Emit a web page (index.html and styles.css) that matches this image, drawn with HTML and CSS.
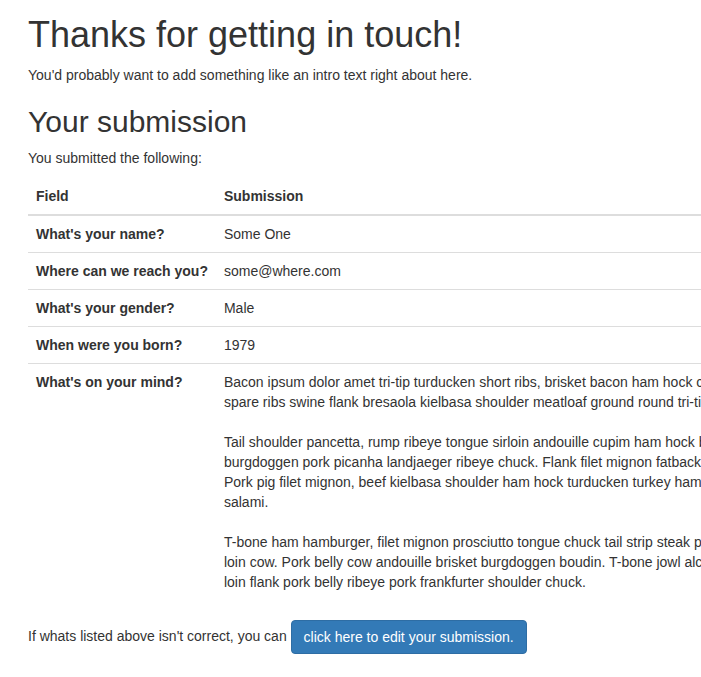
FILE: index.html
```html
<!DOCTYPE html>
<html lang="en">
<head>
<meta charset="utf-8">
<title>Thanks for getting in touch!</title>
<link rel="stylesheet" href="styles.css">
</head>
<body>
<div class="container">
  <h1 class="title">Thanks for getting in touch!</h1>
  <p class="lead-text">You'd probably want to add something like an intro text right about here.</p>
  <h2 class="subtitle">Your submission</h2>
  <p class="lead-text">You submitted the following:</p>
  <table class="table">
    <thead>
      <tr><th class="col-field">Field</th><th>Submission</th></tr>
    </thead>
    <tbody>
      <tr><th class="col-field">What's your name?</th><td>Some One</td></tr>
      <tr><th class="col-field">Where can we reach you?</th><td>some@where.com</td></tr>
      <tr><th class="col-field">What's your gender?</th><td>Male</td></tr>
      <tr><th class="col-field">When were you born?</th><td>1979</td></tr>
      <tr><th class="col-field">What's on your mind?</th><td class="long">Bacon ipsum dolor amet tri-tip turducken short ribs, brisket bacon ham hock chicken pork loin jerky.<br>spare ribs swine flank bresaola kielbasa shoulder meatloaf ground round tri-tip capicola.<br><br>Tail shoulder pancetta, rump ribeye tongue sirloin andouille cupim ham hock beef ribs jowl.<br>burgdoggen pork picanha landjaeger ribeye chuck. Flank filet mignon fatback pastrami kevin.<br>Pork pig filet mignon, beef kielbasa shoulder ham hock turducken turkey hamburger drumstick<br>salami.<br><br>T-bone ham hamburger, filet mignon prosciutto tongue chuck tail strip steak pig short<br>loin cow. Pork belly cow andouille brisket burgdoggen boudin. T-bone jowl alcatra strip<br>loin flank pork belly ribeye pork frankfurter shoulder chuck.</td></tr>
    </tbody>
  </table>
  <p class="lead-text">If whats listed above isn't correct, you can <a class="btn" href="#">click here to edit your submission.</a></p>
</div>
</body>
</html>
```
FILE: styles.css
```css
html, body {
  margin: 0;
  padding: 0;
  overflow: hidden;
  background: #fff;
}
body {
  font-family: "Liberation Sans", Arial, sans-serif;
  font-size: 14px;
  line-height: 20px;
  color: #333;
}
.container {
  width: 1000px;
  padding: 0 28px;
}
.title {
  font-size: 36px;
  font-weight: 500;
  line-height: 1.1;
  margin: 15px 0 10px;
}
.subtitle {
  font-size: 30px;
  font-weight: 500;
  line-height: 1.1;
  margin: 20px 0 10px;
}
.lead-text {
  margin: 0 0 10px;
}
.table {
  border-collapse: collapse;
  border-spacing: 0;
  width: 100%;
  margin-bottom: 20px;
}
.table th,
.table td {
  padding: 8px;
  text-align: left;
  vertical-align: top;
  border-top: 1px solid #ddd;
  line-height: 20px;
}
.table thead th {
  border-top: 0;
  border-bottom: 2px solid #ddd;
  vertical-align: bottom;
}
.col-field {
  white-space: nowrap;
  width: 1px;
}
.long {
  white-space: nowrap;
}
.btn {
  display: inline-block;
  padding: 6px 12px;
  font-size: 14px;
  line-height: 20px;
  color: #fff;
  background-color: #337ab7;
  border: 1px solid #2e6da4;
  border-radius: 4px;
  text-decoration: none;
  vertical-align: middle;
}
```
